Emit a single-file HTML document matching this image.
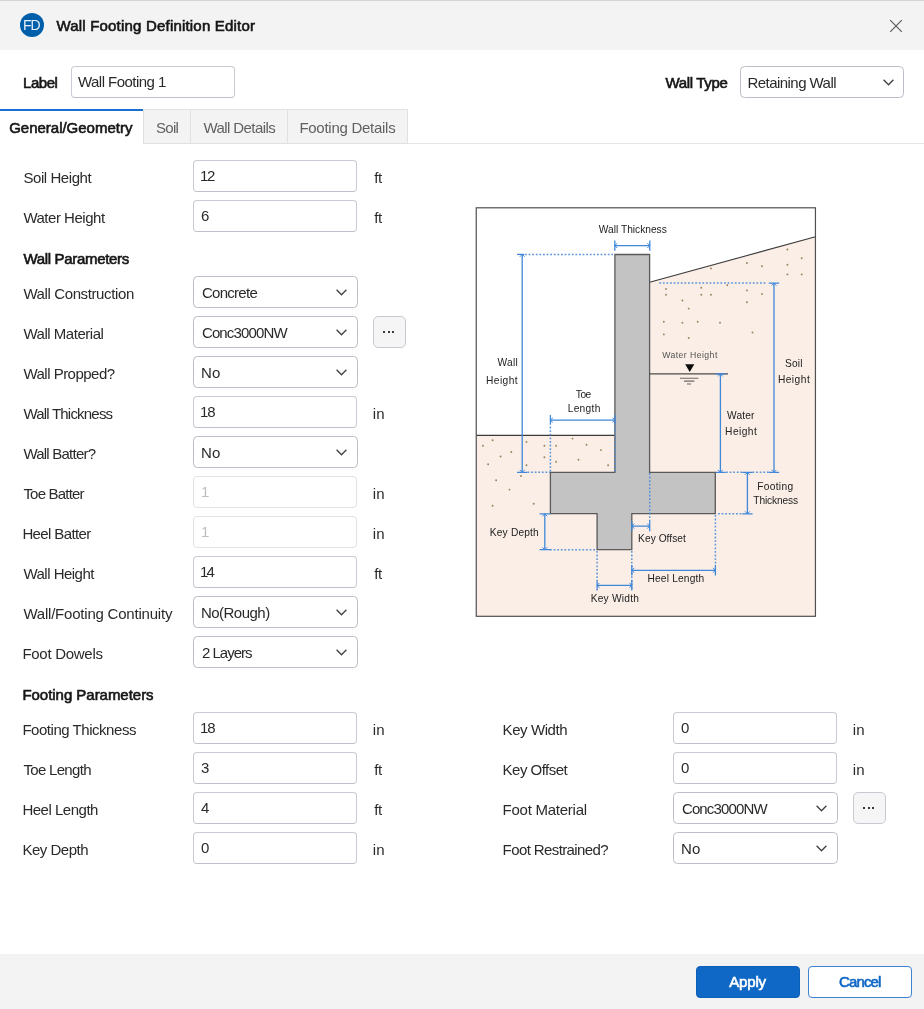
<!DOCTYPE html>
<html lang="en">
<head>
<meta charset="utf-8">
<title>Wall Footing Definition Editor</title>
<style>
*{box-sizing:border-box;margin:0;padding:0}
html,body{width:924px;height:1009px;overflow:hidden;background:#fff}
body{position:relative;font-family:"Liberation Sans",sans-serif;font-size:15px;color:#2a2a2a}
#w{position:absolute;left:0;top:0;width:924px;height:1009px;will-change:transform;transform:translateZ(0)}
.abs{position:absolute}
.t{position:absolute;white-space:pre;line-height:20px;height:20px}
.b{color:#161616;-webkit-text-stroke:0.62px #161616}
#titlebar{left:0;top:0;width:924px;height:50px;background:#f3f3f3;border-top:1px solid #d4d4d4}
#footer{left:0;top:954px;width:924px;height:55px;background:#f3f3f3}
.inp{position:absolute;width:164px;height:32px;border:1.2px solid #c9cad3;border-bottom-color:#bfc0ca;border-radius:4px;background:#fff}
.inp.dis{color:#bdbdbd;border-color:#e2e2e5}
.sel{position:absolute;width:165px;height:32px;border:1.5px solid #bcbdc6;border-radius:4.5px;background:#fff}
.sel svg{position:absolute;right:9.8px;top:11.6px}
.more{position:absolute;width:32.3px;height:32px;border:1.2px solid #c8cad2;border-radius:5px;background:#f5f5f5}
.more i{position:absolute;top:14px;width:2px;height:1.8px;background:#3a3a3a}
.tab{position:absolute;top:109px;height:35px;background:#f3f3f3;border:1px solid #e0e0e0;border-left:none}
svg text{font-family:"Liberation Sans",sans-serif}
</style>
</head>
<body>
<div id="w">
<div id="titlebar" class="abs"></div>
<div class="abs" style="left:20px;top:13px;width:24px;height:24px;border-radius:12px;background:#005fab"></div>
<svg class="abs" style="left:889.1px;top:18.6px" width="14" height="14" viewBox="0 0 14 14"><path d="M1.2 1.2 L12.8 12.8 M12.8 1.2 L1.2 12.8" stroke="#555" stroke-width="1.1" fill="none"/></svg>
<div class="inp" style="left:70.5px;top:66px;width:164px;"></div>
<div class="sel" style="left:740px;top:66px;width:164px"><svg style="right:8.9px" width="11" height="7" viewBox="0 0 11 7"><path d="M0.6 0.7 L5.5 5.7 L10.4 0.7" stroke="#404040" stroke-width="1.3" fill="none"/></svg></div>
<div class="abs" style="left:0;top:143px;width:924px;height:1px;background:#e6e6e6"></div>
<div class="abs" style="left:0;top:109px;width:143.5px;height:2px;background:#1a6fd0"></div>
<div class="abs" style="left:0;top:111px;width:143.5px;height:34px;background:#fff"></div>
<div class="tab" style="left:143px;width:48px;border-left:1px solid #e0e0e0"></div>
<div class="tab" style="left:191px;width:96.5px"></div>
<div class="tab" style="left:287.5px;width:120px"></div>
<div class="inp" style="left:192.5px;top:160px;width:164px;"></div>
<div class="inp" style="left:192.5px;top:200px;width:164px;"></div>
<div class="sel" style="left:193.2px;top:276px;width:164.4px"><svg width="11" height="7" viewBox="0 0 11 7"><path d="M0.6 0.7 L5.5 5.7 L10.4 0.7" stroke="#404040" stroke-width="1.3" fill="none"/></svg></div>
<div class="sel" style="left:193.2px;top:316px;width:164.4px"><svg width="11" height="7" viewBox="0 0 11 7"><path d="M0.6 0.7 L5.5 5.7 L10.4 0.7" stroke="#404040" stroke-width="1.3" fill="none"/></svg></div>
<div class="more" style="left:373.3px;top:316px"><i style="left:9.2px"></i><i style="left:13.4px"></i><i style="left:17.5px"></i></div>
<div class="sel" style="left:193.2px;top:356px;width:164.4px"><svg width="11" height="7" viewBox="0 0 11 7"><path d="M0.6 0.7 L5.5 5.7 L10.4 0.7" stroke="#404040" stroke-width="1.3" fill="none"/></svg></div>
<div class="inp" style="left:192.5px;top:396px;width:164px;"></div>
<div class="sel" style="left:193.2px;top:436px;width:164.4px"><svg width="11" height="7" viewBox="0 0 11 7"><path d="M0.6 0.7 L5.5 5.7 L10.4 0.7" stroke="#404040" stroke-width="1.3" fill="none"/></svg></div>
<div class="inp dis" style="left:192.5px;top:476px;width:164px;"></div>
<div class="inp dis" style="left:192.5px;top:516px;width:164px;"></div>
<div class="inp" style="left:192.5px;top:556px;width:164px;"></div>
<div class="sel" style="left:193.2px;top:596px;width:164.4px"><svg width="11" height="7" viewBox="0 0 11 7"><path d="M0.6 0.7 L5.5 5.7 L10.4 0.7" stroke="#404040" stroke-width="1.3" fill="none"/></svg></div>
<div class="sel" style="left:193.2px;top:636px;width:164.4px"><svg width="11" height="7" viewBox="0 0 11 7"><path d="M0.6 0.7 L5.5 5.7 L10.4 0.7" stroke="#404040" stroke-width="1.3" fill="none"/></svg></div>
<div class="inp" style="left:192.5px;top:712px;width:164px;"></div>
<div class="inp" style="left:192.5px;top:752px;width:164px;"></div>
<div class="inp" style="left:192.5px;top:792px;width:164px;"></div>
<div class="inp" style="left:192.5px;top:832px;width:164px;"></div>
<div class="inp" style="left:672.5px;top:712px;width:164px;"></div>
<div class="inp" style="left:672.5px;top:752px;width:164px;"></div>
<div class="sel" style="left:673.2px;top:792px;width:164.4px"><svg width="11" height="7" viewBox="0 0 11 7"><path d="M0.6 0.7 L5.5 5.7 L10.4 0.7" stroke="#404040" stroke-width="1.3" fill="none"/></svg></div>
<div class="more" style="left:853.3px;top:792px"><i style="left:9.2px"></i><i style="left:13.4px"></i><i style="left:17.5px"></i></div>
<div class="sel" style="left:673.2px;top:832px;width:164.4px"><svg width="11" height="7" viewBox="0 0 11 7"><path d="M0.6 0.7 L5.5 5.7 L10.4 0.7" stroke="#404040" stroke-width="1.3" fill="none"/></svg></div>
<svg class="abs" style="left:470px;top:200px" width="354" height="425" viewBox="470 200 354 425">
<rect x="476.25" y="207.8" width="339.2" height="408.5" fill="#fff"/>
<polygon points="476.25,435.4 649.6,435.4 649.6,282.2 815.45,236.8 815.45,616.3 476.25,616.3" fill="#faeee6"/>
<circle cx="787.4" cy="249.5" r="0.95" fill="#94855e"/>
<circle cx="801.7" cy="258.2" r="0.95" fill="#94855e"/>
<circle cx="746.9" cy="263.0" r="0.95" fill="#94855e"/>
<circle cx="762.0" cy="266.2" r="0.95" fill="#94855e"/>
<circle cx="787.4" cy="264.7" r="0.95" fill="#94855e"/>
<circle cx="711.0" cy="268.4" r="0.95" fill="#94855e"/>
<circle cx="787.4" cy="274.4" r="0.95" fill="#94855e"/>
<circle cx="801.7" cy="274.4" r="0.95" fill="#94855e"/>
<circle cx="727.3" cy="285.3" r="0.95" fill="#94855e"/>
<circle cx="666.0" cy="289.0" r="0.95" fill="#94855e"/>
<circle cx="701.3" cy="287.8" r="0.95" fill="#94855e"/>
<circle cx="746.9" cy="290.4" r="0.95" fill="#94855e"/>
<circle cx="666.0" cy="294.8" r="0.95" fill="#94855e"/>
<circle cx="701.3" cy="294.8" r="0.95" fill="#94855e"/>
<circle cx="711.0" cy="294.8" r="0.95" fill="#94855e"/>
<circle cx="762.0" cy="294.0" r="0.95" fill="#94855e"/>
<circle cx="682.4" cy="300.5" r="0.95" fill="#94855e"/>
<circle cx="746.9" cy="302.2" r="0.95" fill="#94855e"/>
<circle cx="688.7" cy="308.6" r="0.95" fill="#94855e"/>
<circle cx="663.8" cy="321.8" r="0.95" fill="#94855e"/>
<circle cx="682.4" cy="322.8" r="0.95" fill="#94855e"/>
<circle cx="697.7" cy="321.8" r="0.95" fill="#94855e"/>
<circle cx="720.0" cy="322.8" r="0.95" fill="#94855e"/>
<circle cx="663.8" cy="334.4" r="0.95" fill="#94855e"/>
<circle cx="688.7" cy="338.0" r="0.95" fill="#94855e"/>
<circle cx="752.5" cy="332.5" r="0.95" fill="#94855e"/>
<circle cx="492.6" cy="440.3" r="0.95" fill="#94855e"/>
<circle cx="526.5" cy="441.9" r="0.95" fill="#94855e"/>
<circle cx="572.5" cy="438.6" r="0.95" fill="#94855e"/>
<circle cx="482.9" cy="445.8" r="0.95" fill="#94855e"/>
<circle cx="544.4" cy="445.8" r="0.95" fill="#94855e"/>
<circle cx="556.1" cy="445.8" r="0.95" fill="#94855e"/>
<circle cx="586.5" cy="444.8" r="0.95" fill="#94855e"/>
<circle cx="511.3" cy="452.0" r="0.95" fill="#94855e"/>
<circle cx="600.9" cy="450.1" r="0.95" fill="#94855e"/>
<circle cx="500.6" cy="456.5" r="0.95" fill="#94855e"/>
<circle cx="544.4" cy="457.3" r="0.95" fill="#94855e"/>
<circle cx="556.1" cy="461.8" r="0.95" fill="#94855e"/>
<circle cx="578.5" cy="459.8" r="0.95" fill="#94855e"/>
<circle cx="488.1" cy="464.3" r="0.95" fill="#94855e"/>
<circle cx="526.5" cy="465.3" r="0.95" fill="#94855e"/>
<circle cx="608.1" cy="465.3" r="0.95" fill="#94855e"/>
<circle cx="521.0" cy="476.0" r="0.95" fill="#94855e"/>
<circle cx="496.1" cy="480.3" r="0.95" fill="#94855e"/>
<circle cx="509.5" cy="489.6" r="0.95" fill="#94855e"/>
<circle cx="533.7" cy="503.8" r="0.95" fill="#94855e"/>
<circle cx="492.6" cy="505.8" r="0.95" fill="#94855e"/>
<path d="M476.5 435.4 H614.9 M649.6 282.2 L815.5 236.8" stroke="#3a3a3a" stroke-width="1.1" fill="none"/>
<polygon points="614.9,254.5 649.6,254.5 649.6,472.3 715.3,472.3 715.3,513.7 631.8,513.7 631.8,549.6 597.1,549.6 597.1,513.7 550.4,513.7 550.4,472.3 614.9,472.3" fill="#c3c3c3" stroke="#5a5a5a" stroke-width="1.3"/>
<path d="M650 373.9 H728" stroke="#4e4a48" stroke-width="1.4" fill="none"/>
<polygon points="685.2,364.3 694.3,364.3 689.7,372" fill="#0c0c0c"/>
<path d="M680 378.2 H698.4 M684.1 381.1 H694.3 M687 384 H691.1" stroke="#6c6966" stroke-width="1.1" fill="none"/>
<path d="M525 254.5 H613" stroke="#3f87d9" stroke-width="1.5" stroke-opacity="0.85" stroke-dasharray="1.8 1.8" fill="none"/>
<path d="M527.5 472.3 H550" stroke="#3f87d9" stroke-width="1.5" stroke-opacity="0.85" stroke-dasharray="1.8 1.8" fill="none"/>
<path d="M659.2 283.1 H767" stroke="#3f87d9" stroke-width="1.5" stroke-opacity="0.85" stroke-dasharray="1.8 1.8" fill="none"/>
<path d="M726 472.3 H742 M752.5 472.3 H769" stroke="#3f87d9" stroke-width="1.5" stroke-opacity="0.85" stroke-dasharray="1.8 1.8" fill="none"/>
<path d="M718 513.8 H742" stroke="#3f87d9" stroke-width="1.5" stroke-opacity="0.85" stroke-dasharray="1.8 1.8" fill="none"/>
<path d="M550.4 423 V472" stroke="#3f87d9" stroke-width="1.5" stroke-opacity="0.85" stroke-dasharray="1.8 1.8" fill="none"/>
<path d="M614.9 423 V472" stroke="#3f87d9" stroke-width="1.5" stroke-opacity="0.85" stroke-dasharray="1.8 1.8" fill="none"/>
<path d="M550 549.8 H597" stroke="#3f87d9" stroke-width="1.5" stroke-opacity="0.85" stroke-dasharray="1.8 1.8" fill="none"/>
<path d="M649.7 473 V521" stroke="#3f87d9" stroke-width="1.5" stroke-opacity="0.85" stroke-dasharray="1.8 1.8" fill="none"/>
<path d="M631.8 551 V590" stroke="#3f87d9" stroke-width="1.5" stroke-opacity="0.85" stroke-dasharray="1.8 1.8" fill="none"/>
<path d="M597.1 551 V580" stroke="#3f87d9" stroke-width="1.5" stroke-opacity="0.85" stroke-dasharray="1.8 1.8" fill="none"/>
<path d="M715.4 515 V565" stroke="#3f87d9" stroke-width="1.5" stroke-opacity="0.85" stroke-dasharray="1.8 1.8" fill="none"/>
<path d="M614.8 245.6 H649.8 M614.8 240.4 V250.79999999999998 M649.8 240.4 V250.79999999999998" stroke="#3f87d9" stroke-width="1.3" fill="none" stroke-linejoin="miter"/>
<path d="M617.1999999999999 243.2 L614.8 245.6 L617.1999999999999 248.0 M647.4 243.2 L649.8 245.6 L647.4 248.0" stroke="#3f87d9" stroke-width="1.0" fill="none" stroke-linejoin="miter"/>
<path d="M522.2 254.4 V472.3 M517.0 254.4 H524.2 M517.0 472.3 H527.4000000000001" stroke="#3f87d9" stroke-width="1.3" fill="none" stroke-linejoin="miter"/>
<path d="M519.8000000000001 256.8 L522.2 254.4 L524.6 256.8 M519.8000000000001 469.90000000000003 L522.2 472.3 L524.6 469.90000000000003" stroke="#3f87d9" stroke-width="1.0" fill="none" stroke-linejoin="miter"/>
<path d="M774 283.2 V472.3 M768.8 283.2 H779.2 M768.8 472.3 H779.2" stroke="#3f87d9" stroke-width="1.3" fill="none" stroke-linejoin="miter"/>
<path d="M771.6 285.59999999999997 L774 283.2 L776.4 285.59999999999997 M771.6 469.90000000000003 L774 472.3 L776.4 469.90000000000003" stroke="#3f87d9" stroke-width="1.0" fill="none" stroke-linejoin="miter"/>
<path d="M720.4 373.9 V472.3 M715.1999999999999 373.9 H725.6 M715.8 472.3 H725.6" stroke="#3f87d9" stroke-width="1.3" fill="none" stroke-linejoin="miter"/>
<path d="M718.0 376.29999999999995 L720.4 373.9 L722.8 376.29999999999995 M718.0 469.90000000000003 L720.4 472.3 L722.8 469.90000000000003" stroke="#3f87d9" stroke-width="1.0" fill="none" stroke-linejoin="miter"/>
<path d="M747.4 472.3 V513.8 M742.1999999999999 472.3 H752.6 M742.1999999999999 513.8 H752.6" stroke="#3f87d9" stroke-width="1.3" fill="none" stroke-linejoin="miter"/>
<path d="M745.0 474.7 L747.4 472.3 L749.8 474.7 M745.0 511.4 L747.4 513.8 L749.8 511.4" stroke="#3f87d9" stroke-width="1.0" fill="none" stroke-linejoin="miter"/>
<path d="M550.4 420.2 H614.9 M550.4 415.0 V423.0 M614.9 415.0 V423.0" stroke="#3f87d9" stroke-width="1.3" fill="none" stroke-linejoin="miter"/>
<path d="M552.8 417.8 L550.4 420.2 L552.8 422.59999999999997 M612.5 417.8 L614.9 420.2 L612.5 422.59999999999997" stroke="#3f87d9" stroke-width="1.0" fill="none" stroke-linejoin="miter"/>
<path d="M544.8 513.8 V549.7 M539.5999999999999 513.8 H550.3 M539.5999999999999 549.7 H550.3" stroke="#3f87d9" stroke-width="1.3" fill="none" stroke-linejoin="miter"/>
<path d="M542.4 516.1999999999999 L544.8 513.8 L547.1999999999999 516.1999999999999 M542.4 547.3000000000001 L544.8 549.7 L547.1999999999999 547.3000000000001" stroke="#3f87d9" stroke-width="1.0" fill="none" stroke-linejoin="miter"/>
<path d="M631.8 526.1 H649.7 M631.8 521.1 V531.3000000000001 M649.7 521.1 V531.3000000000001" stroke="#3f87d9" stroke-width="1.3" fill="none" stroke-linejoin="miter"/>
<path d="M634.1999999999999 523.7 L631.8 526.1 L634.1999999999999 528.5 M647.3000000000001 523.7 L649.7 526.1 L647.3000000000001 528.5" stroke="#3f87d9" stroke-width="1.0" fill="none" stroke-linejoin="miter"/>
<path d="M631.8 570.3 H715.4 M631.8 565.0999999999999 V575.5 M715.4 565.0999999999999 V575.5" stroke="#3f87d9" stroke-width="1.3" fill="none" stroke-linejoin="miter"/>
<path d="M634.1999999999999 567.9 L631.8 570.3 L634.1999999999999 572.6999999999999 M713.0 567.9 L715.4 570.3 L713.0 572.6999999999999" stroke="#3f87d9" stroke-width="1.0" fill="none" stroke-linejoin="miter"/>
<path d="M597.1 585.3 H631.8 M597.1 580.0999999999999 V590.5 M631.8 580.0999999999999 V590.5" stroke="#3f87d9" stroke-width="1.3" fill="none" stroke-linejoin="miter"/>
<path d="M599.5 582.9 L597.1 585.3 L599.5 587.6999999999999 M629.4 582.9 L631.8 585.3 L629.4 587.6999999999999" stroke="#3f87d9" stroke-width="1.0" fill="none" stroke-linejoin="miter"/>
<text x="598.80" y="233.4" font-size="10.2" fill="#222" letter-spacing="0.006">Wall Thickness</text>
<text x="662.20" y="357.8" font-size="8.7" fill="#535353" letter-spacing="0.431">Water Height</text>
<text x="785.10" y="367.2" font-size="10.2" fill="#222" letter-spacing="0.159">Soil</text>
<text x="777.90" y="383.2" font-size="10.2" fill="#222" letter-spacing="0.476">Height</text>
<text x="727.10" y="418.9" font-size="10.2" fill="#222" letter-spacing="0.100">Water</text>
<text x="725.10" y="435.4" font-size="10.2" fill="#222" letter-spacing="0.436">Height</text>
<text x="497.60" y="366.1" font-size="10.2" fill="#222" letter-spacing="0.211">Wall</text>
<text x="486.10" y="384.0" font-size="10.2" fill="#222" letter-spacing="0.396">Height</text>
<text x="575.80" y="398.2" font-size="10.2" fill="#222" letter-spacing="-0.479">Toe</text>
<text x="567.70" y="412.4" font-size="10.2" fill="#222" letter-spacing="0.301">Length</text>
<text x="757.20" y="489.7" font-size="10.2" fill="#222" letter-spacing="0.314">Footing</text>
<text x="753.30" y="504.0" font-size="10.2" fill="#222" letter-spacing="-0.133">Thickness</text>
<text x="489.80" y="536.0" font-size="10.2" fill="#222" letter-spacing="0.174">Key Depth</text>
<text x="638.10" y="541.5" font-size="10.2" fill="#222" letter-spacing="0.039">Key Offset</text>
<text x="647.50" y="581.6" font-size="10.2" fill="#222" letter-spacing="0.172">Heel Length</text>
<text x="590.70" y="602.4" font-size="10.2" fill="#222" letter-spacing="0.218">Key Width</text>
<rect x="476.25" y="207.8" width="339.2" height="408.5" fill="none" stroke="#505050" stroke-width="1.2"/>
</svg>
<div id="footer" class="abs"></div>
<div class="abs" style="left:696px;top:966px;width:104px;height:32px;border-radius:4px;background:#0f68c6;border:1px solid #0d60b8"></div>
<div class="abs" style="left:808px;top:966px;width:104px;height:32px;border-radius:4px;background:#fff;border:1px solid #3b83cf"></div>
<div class="t" style="left:23.00px;top:15.00px;font-size:14px;letter-spacing:-0.952px;color:rgba(255,255,255,.9)">FD</div>
<div class="t b" style="left:56.40px;top:16.00px;letter-spacing:0.198px;">Wall Footing Definition Editor</div>
<div class="t b" style="left:23.00px;top:73.00px;letter-spacing:-0.467px;">Label</div>
<div class="t" style="left:78.00px;top:72.00px;letter-spacing:-0.537px;">Wall Footing 1</div>
<div class="t b" style="left:665.40px;top:73.00px;letter-spacing:-0.332px;">Wall Type</div>
<div class="t" style="left:747.50px;top:73.00px;letter-spacing:-0.548px;">Retaining Wall</div>
<div class="t b" style="left:9.20px;top:118.00px;letter-spacing:-0.012px;">General/Geometry</div>
<div class="t" style="left:156.10px;top:118.00px;letter-spacing:-0.727px;color:#616161">Soil</div>
<div class="t" style="left:203.40px;top:118.00px;letter-spacing:-0.575px;color:#616161">Wall Details</div>
<div class="t" style="left:299.40px;top:118.00px;letter-spacing:-0.268px;color:#616161">Footing Details</div>
<div class="t" style="left:23.40px;top:168.00px;letter-spacing:-0.427px;">Soil Height</div>
<div class="t" style="left:200.00px;top:166.00px;letter-spacing:-1.342px;">12</div>
<div class="t" style="left:374.30px;top:168.00px;letter-spacing:-0.367px;">ft</div>
<div class="t" style="left:23.40px;top:208.00px;letter-spacing:-0.483px;">Water Height</div>
<div class="t" style="left:201.00px;top:206.00px;">6</div>
<div class="t" style="left:374.30px;top:208.00px;letter-spacing:-0.367px;">ft</div>
<div class="t b" style="left:23.40px;top:249.00px;letter-spacing:-0.314px;">Wall Parameters</div>
<div class="t" style="left:23.40px;top:284.00px;letter-spacing:-0.384px;">Wall Construction</div>
<div class="t" style="left:201.90px;top:283.00px;letter-spacing:-0.717px;">Concrete</div>
<div class="t" style="left:23.40px;top:324.00px;letter-spacing:-0.474px;">Wall Material</div>
<div class="t" style="left:201.90px;top:323.00px;letter-spacing:-0.847px;">Conc3000NW</div>
<div class="t" style="left:23.40px;top:364.00px;letter-spacing:-0.507px;">Wall Propped?</div>
<div class="t" style="left:200.90px;top:363.00px;letter-spacing:0.367px;">No</div>
<div class="t" style="left:23.40px;top:404.00px;letter-spacing:-0.792px;">Wall Thickness</div>
<div class="t" style="left:200.00px;top:402.00px;letter-spacing:-1.142px;">18</div>
<div class="t" style="left:372.80px;top:404.00px;letter-spacing:0.167px;">in</div>
<div class="t" style="left:23.40px;top:444.00px;letter-spacing:-0.772px;">Wall Batter?</div>
<div class="t" style="left:200.90px;top:443.00px;letter-spacing:0.367px;">No</div>
<div class="t" style="left:23.40px;top:484.00px;letter-spacing:-0.797px;">Toe Batter</div>
<div class="t" style="left:201.00px;top:482.00px;color:#bdbdbd">1</div>
<div class="t" style="left:372.80px;top:484.00px;letter-spacing:0.167px;">in</div>
<div class="t" style="left:22.40px;top:524.00px;letter-spacing:-0.624px;">Heel Batter</div>
<div class="t" style="left:201.00px;top:522.00px;color:#bdbdbd">1</div>
<div class="t" style="left:372.80px;top:524.00px;letter-spacing:0.167px;">in</div>
<div class="t" style="left:23.40px;top:564.00px;letter-spacing:-0.507px;">Wall Height</div>
<div class="t" style="left:200.00px;top:562.00px;letter-spacing:-1.842px;">14</div>
<div class="t" style="left:374.30px;top:564.00px;letter-spacing:-0.367px;">ft</div>
<div class="t" style="left:23.40px;top:604.00px;letter-spacing:-0.213px;">Wall/Footing Continuity</div>
<div class="t" style="left:200.90px;top:603.00px;letter-spacing:-0.509px;">No(Rough)</div>
<div class="t" style="left:22.40px;top:644.00px;letter-spacing:-0.276px;">Foot Dowels</div>
<div class="t" style="left:201.90px;top:643.00px;letter-spacing:-0.990px;">2 Layers</div>
<div class="t b" style="left:22.40px;top:685.00px;letter-spacing:-0.031px;">Footing Parameters</div>
<div class="t" style="left:22.40px;top:720.00px;letter-spacing:-0.464px;">Footing Thickness</div>
<div class="t" style="left:200.00px;top:718.00px;letter-spacing:-1.142px;">18</div>
<div class="t" style="left:372.80px;top:720.00px;letter-spacing:0.167px;">in</div>
<div class="t" style="left:23.40px;top:760.00px;letter-spacing:-0.677px;">Toe Length</div>
<div class="t" style="left:201.00px;top:758.00px;">3</div>
<div class="t" style="left:374.30px;top:760.00px;letter-spacing:-0.367px;">ft</div>
<div class="t" style="left:22.40px;top:800.00px;letter-spacing:-0.485px;">Heel Length</div>
<div class="t" style="left:201.00px;top:798.00px;">4</div>
<div class="t" style="left:374.30px;top:800.00px;letter-spacing:-0.367px;">ft</div>
<div class="t" style="left:22.40px;top:840.00px;letter-spacing:-0.475px;">Key Depth</div>
<div class="t" style="left:201.00px;top:838.00px;">0</div>
<div class="t" style="left:372.80px;top:840.00px;letter-spacing:0.167px;">in</div>
<div class="t" style="left:502.60px;top:720.00px;letter-spacing:-0.414px;">Key Width</div>
<div class="t" style="left:681.00px;top:718.00px;">0</div>
<div class="t" style="left:852.80px;top:720.00px;letter-spacing:0.167px;">in</div>
<div class="t" style="left:502.60px;top:760.00px;letter-spacing:-0.521px;">Key Offset</div>
<div class="t" style="left:681.00px;top:758.00px;">0</div>
<div class="t" style="left:852.80px;top:760.00px;letter-spacing:0.167px;">in</div>
<div class="t" style="left:502.60px;top:800.00px;letter-spacing:-0.250px;">Foot Material</div>
<div class="t" style="left:681.90px;top:799.00px;letter-spacing:-0.847px;">Conc3000NW</div>
<div class="t" style="left:502.60px;top:840.00px;letter-spacing:-0.601px;">Foot Restrained?</div>
<div class="t" style="left:680.90px;top:839.00px;letter-spacing:0.367px;">No</div>
<div class="t b" style="left:729.20px;top:972.00px;letter-spacing:-0.155px;color:#fff;-webkit-text-stroke-color:#fff">Apply</div>
<div class="t b" style="left:838.90px;top:972.00px;letter-spacing:-0.832px;color:#0f68c6;-webkit-text-stroke-color:#0f68c6">Cancel</div>
</div>
</body>
</html>
